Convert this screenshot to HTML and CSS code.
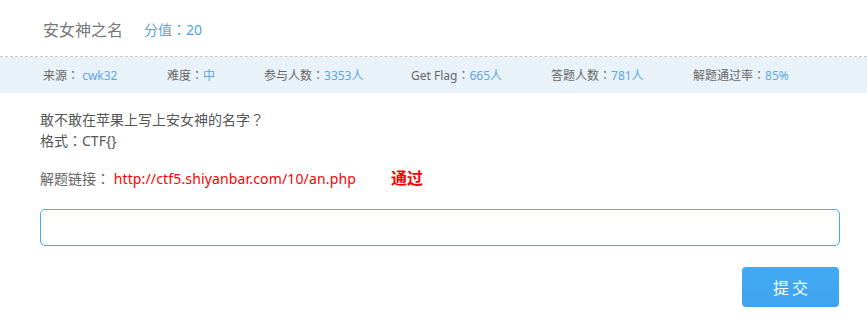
FILE: index.html
```html
<!DOCTYPE html>
<html lang="zh-CN">
<head>
<meta charset="utf-8">
<title>安女神之名</title>
<link rel="stylesheet" href="styles.css">
</head>
<body>
<div class="header">
  <span class="title">安女神之名</span>
  <span class="score">分值<span class="p" lang="zh-TW">：</span>20</span>
</div>
<div class="stats">
  <span class="stat">来源<span class="p" lang="zh-TW">：</span> <em>cwk32</em></span>
  <span class="stat">难度<span class="p" lang="zh-TW">：</span><em>中</em></span>
  <span class="stat">参与人数<span class="p" lang="zh-TW">：</span><em>3353人</em></span>
  <span class="stat">Get Flag<span class="p" lang="zh-TW">：</span><em>665人</em></span>
  <span class="stat">答题人数<span class="p" lang="zh-TW">：</span><em>781人</em></span>
  <span class="stat">解题通过率<span class="p" lang="zh-TW">：</span><em>85%</em></span>
</div>
<div class="content">
  <p class="desc">敢不敢在苹果上写上安女神的名字<span class="p" lang="zh-TW">？</span><br>格式<span class="p" lang="zh-TW">：</span>CTF{}</p>
  <p class="link-line">解题链接<span class="p" lang="zh-TW">：</span> <a class="link" href="#">http://ctf5.shiyanbar.com/10/an.php</a><span class="pass">通过</span></p>
  <input class="answer" type="text">
  <div class="actions"><button class="submit">提交</button></div>
</div>
</body>
</html>
```
FILE: styles.css
```css
* { box-sizing: border-box; }
body {
  margin: 0;
  background: #fff;
  font-family: "Noto Sans", "Noto Sans CJK SC", sans-serif;
  color: #555;
}
.p {
  font-family: "Noto Sans CJK TC", "Noto Sans CJK SC", sans-serif;
}
.header {
  height: 57px;
  display: flex;
  align-items: center;
  padding: 2px 0 0 43px;
  border-bottom: 1px dashed #c8c8c8;
}
.title {
  font-size: 16px;
  color: #777;
}
.score {
  font-size: 14px;
  color: #4ea6ee;
  margin-left: 21px;
}
.stats {
  height: 36px;
  background: #eaf2f9;
  display: flex;
  align-items: center;
  padding-left: 43px;
  font-size: 12px;
  color: #666;
}
.stat { white-space: nowrap; }
.stat:nth-child(1) { width: 124px; }
.stat:nth-child(2) { width: 97px; }
.stat:nth-child(3) { width: 147px; }
.stat:nth-child(4) { width: 140px; }
.stat:nth-child(5) { width: 142px; }
.stat em {
  font-style: normal;
  color: #5aa7ef;
}
.content {
  padding: 0 27px 0 40px;
}
.desc {
  margin: 16px 0 0;
  font-size: 14px;
  line-height: 21px;
  color: #555;
}
.link-line {
  margin: 17px 0 0;
  font-size: 14px;
  line-height: 21px;
  color: #666;
}
.link {
  color: #f00;
  text-decoration: none;
  letter-spacing: 0.15px;
}
.pass {
  color: #f00;
  font-weight: bold;
  font-size: 16px;
  margin-left: 35px;
}
.answer {
  display: block;
  width: 100%;
  height: 37px;
  margin-top: 20px;
  border: 1px solid #4aa8ee;
  border-radius: 5px;
  outline: none;
  background: #fff;
}
.actions {
  display: flex;
  justify-content: flex-end;
  margin-top: 21px;
}
.submit {
  width: 97px;
  height: 40px;
  border: none;
  border-radius: 4px;
  background: linear-gradient(#42aaf4, #3fa3ee);
  color: #fff;
  font-family: "Noto Sans CJK SC", sans-serif;
  font-size: 16px;
  letter-spacing: 3px;
  padding-left: 9px;
  margin-right: 1px;
}
```
